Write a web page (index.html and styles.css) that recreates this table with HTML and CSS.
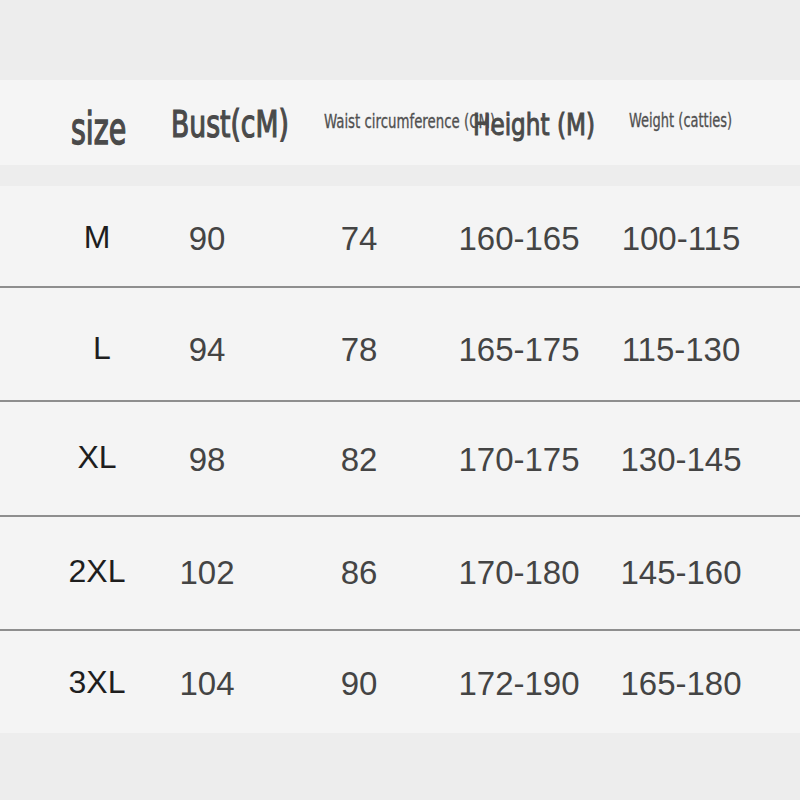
FILE: index.html
```html
<!DOCTYPE html>
<html>
<head>
<meta charset="utf-8">
<link rel="stylesheet" href="styles.css">
</head>
<body>
<div class="page">
  <div class="head">
    <div class="hc h-size">size</div>
    <div class="hc h-bust">Bust(cM)</div>
    <div class="hc h-waist">Waist circumference (CM)</div>
    <div class="hc h-height">Height (M)</div>
    <div class="hc h-weight">Weight (catties)</div>
  </div>
  <div class="body">
    <div class="row r1"><div class="c c1">M</div><div class="c c2">90</div><div class="c c3">74</div><div class="c c4">160-165</div><div class="c c5">100-115</div></div>
    <div class="row r2"><div class="c c1">L</div><div class="c c2">94</div><div class="c c3">78</div><div class="c c4">165-175</div><div class="c c5">115-130</div></div>
    <div class="row r3"><div class="c c1">XL</div><div class="c c2">98</div><div class="c c3">82</div><div class="c c4">170-175</div><div class="c c5">130-145</div></div>
    <div class="row r4"><div class="c c1">2XL</div><div class="c c2">102</div><div class="c c3">86</div><div class="c c4">170-180</div><div class="c c5">145-160</div></div>
    <div class="row r5"><div class="c c1">3XL</div><div class="c c2">104</div><div class="c c3">90</div><div class="c c4">172-190</div><div class="c c5">165-180</div></div>
  </div>
</div>
</body>
</html>
```
FILE: styles.css
```css
* { box-sizing: border-box; }
html, body { margin: 0; padding: 0; }
body { background: #ededed; width: 800px; height: 800px; overflow: hidden; }
.page { padding-top: 80px; display: flex; flex-direction: column; }
.head {
  height: 85px;
  background: #f5f5f5;
  display: flex;
  align-items: center;
  padding-left: 71px;
  font-family: "Liberation Sans Narrow", "DejaVu Sans Condensed", "Roboto", sans-serif;
  font-stretch: condensed;
  color: #4a4a4a;
}
.hc { white-space: nowrap; transform-origin: left center; }
.h-size { width: 100px; font-size: 44px; -webkit-text-stroke: 1.4px #4a4a4a; margin-top: 12px; transform: scaleX(0.72); }
.h-bust { width: 153px; font-size: 37px; -webkit-text-stroke: 1.2px #4a4a4a; margin-top: 4px; transform: scaleX(0.8); }
.h-waist { width: 149px; font-size: 19px; -webkit-text-stroke: 0.3px #505050; margin-top: -4px; transform: scaleX(0.78); color: #505050; }
.h-height { width: 156px; font-size: 31px; -webkit-text-stroke: 1px #4a4a4a; margin-top: 2px; transform: scaleX(0.83); }
.h-weight { font-size: 19px; -webkit-text-stroke: 0.3px #505050; margin-top: -6px; transform: scaleX(0.76); color: #505050; }
.body {
  margin-top: 21px;
  background: #f4f4f4;
  font-family: "Liberation Sans", Arial, sans-serif;
  font-size: 33px;
  color: #444;
}
.row {
  display: flex;
  align-items: center;
  padding-left: 42px;
  border-bottom: 2px solid #8e8e8e;
}
.row.r5 { border-bottom: none; }
.r1 { height: 102px; padding-top: 6px; }
.r2 { height: 114px; padding-top: 12px; }
.r3 { height: 115px; padding-top: 2px; }
.r4 { height: 114px; }
.r5 { height: 102px; padding-top: 4px; }
.c { display: flex; justify-content: center; white-space: nowrap; }
.c1 { width: 110px; color: #1e1e1e; font-size: 32px; margin-top: -4px; }
.c2 { width: 110px; }
.c3 { width: 194px; }
.c4 { width: 126px; }
.c5 { width: 198px; }
.r2 .c1 { margin-left: 5px; margin-right: -5px; }
```
